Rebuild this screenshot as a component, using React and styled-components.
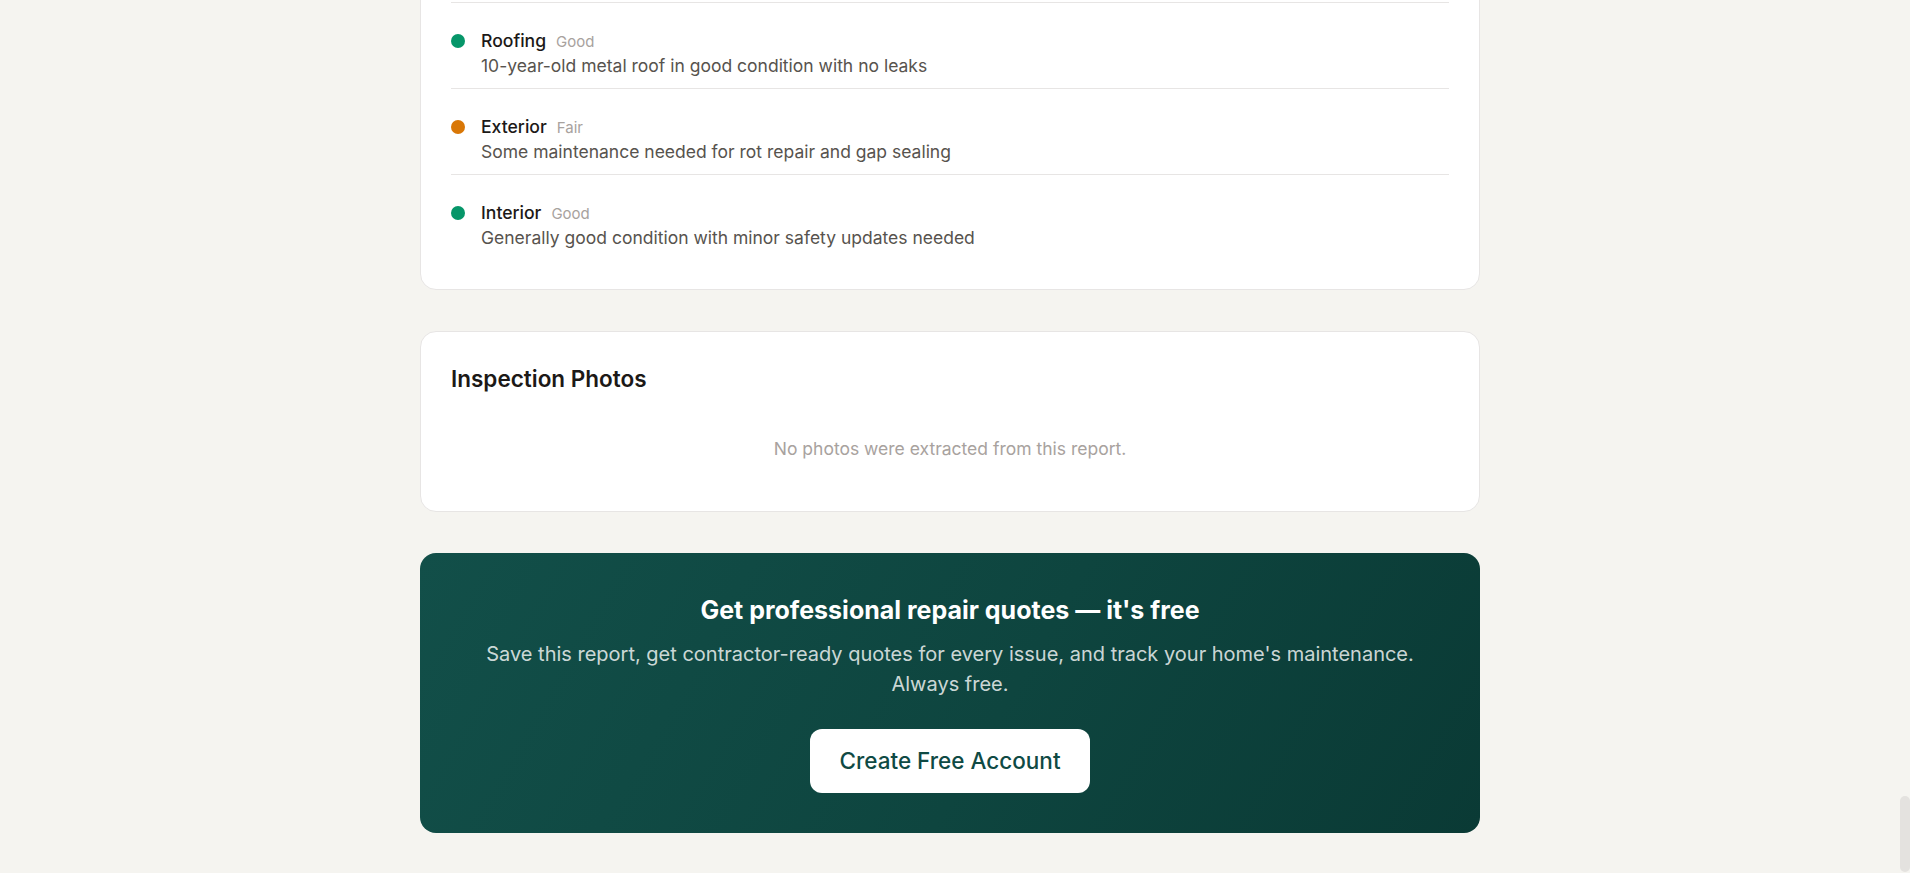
import React from "react";
import styled, { createGlobalStyle } from "styled-components";

const GlobalStyle = createGlobalStyle`
  html, body {
    margin: 0;
    padding: 0;
    background: #f5f4f0;
    font-family: Inter, "Noto Sans", sans-serif;
    overflow: hidden;
  }

  * {
    box-sizing: border-box;
  }
`;

const systems = [
  {
    name: "Roofing",
    status: "Good",
    tone: "good",
    note: "10-year-old metal roof in good condition with no leaks",
  },
  {
    name: "Exterior",
    status: "Fair",
    tone: "fair",
    note: "Some maintenance needed for rot repair and gap sealing",
  },
  {
    name: "Interior",
    status: "Good",
    tone: "good",
    note: "Generally good condition with minor safety updates needed",
  },
];

const toneColors = {
  good: "#069669",
  fair: "#d97706",
};

export default function App() {
  return (
    <>
      <GlobalStyle />
      <Page>
        <Column>
          <SystemsCard>
            <SystemList>
              {systems.map((item) => (
                <SystemRow key={item.name}>
                  <StatusDot $tone={item.tone} />
                  <SystemBody>
                    <SystemHead>
                      <SystemName>{item.name}</SystemName>
                      <SystemStatus>{item.status}</SystemStatus>
                    </SystemHead>
                    <SystemNote>{item.note}</SystemNote>
                  </SystemBody>
                </SystemRow>
              ))}
            </SystemList>
          </SystemsCard>

          <PhotosCard>
            <CardTitle>Inspection Photos</CardTitle>
            <EmptyText>No photos were extracted from this report.</EmptyText>
          </PhotosCard>

          <Banner>
            <BannerTitle>Get professional repair quotes — it's free</BannerTitle>
            <BannerText>
              Save this report, get contractor-ready quotes for every issue, and
              track your home's maintenance. Always free.
            </BannerText>
            <BannerButton type="button">Create Free Account</BannerButton>
          </Banner>
        </Column>
      </Page>
      <ScrollThumb />
    </>
  );
}

// 페이지를 아래쪽에 붙여서 스크롤 끝 상태처럼 보이게
const Page = styled.main`
  height: 100vh;
  display: flex;
  flex-direction: column;
  justify-content: flex-end;
  align-items: center;
  padding: 0 10px 40px 0;
  overflow: hidden;
`;

const Column = styled.div`
  width: 1060px;
  display: flex;
  flex-direction: column;
  gap: 41px;
  flex-shrink: 0;
`;

const Card = styled.section`
  background: #ffffff;
  border: 1px solid #e7e5e4;
  border-radius: 16px;
`;

const SystemsCard = styled(Card)`
  padding: 32px 30px 29px;
`;

const PhotosCard = styled(Card)`
  padding: 32px 30px;
`;

const CardTitle = styled.h2`
  margin: 0 0 12px;
  font-size: 22.5px;
  line-height: 30px;
  font-weight: 600;
  color: #1c1917;
`;

const SystemList = styled.ul`
  list-style: none;
  margin: 0;
  padding: 0;
`;

const SystemRow = styled.li`
  display: flex;
  align-items: flex-start;
  gap: 16px;
  padding: 25px 0 9px;
  border-top: 1px solid #e7e5e4;
`;

const StatusDot = styled.span`
  width: 14px;
  height: 14px;
  margin-top: 6px;
  border-radius: 50%;
  flex-shrink: 0;
  background: ${({ $tone }) => toneColors[$tone]};
`;

const SystemBody = styled.div`
  display: flex;
  flex-direction: column;
`;

const SystemHead = styled.div`
  display: flex;
  align-items: baseline;
  gap: 10px;
`;

const SystemName = styled.span`
  font-size: 17.6px;
  line-height: 25px;
  font-weight: 500;
  color: #1c1917;
`;

const SystemStatus = styled.span`
  font-size: 15px;
  line-height: 20px;
  color: #a8a29e;
`;

const SystemNote = styled.p`
  margin: 0;
  font-size: 17.5px;
  line-height: 26px;
  color: #57534e;
`;

const EmptyText = styled.p`
  margin: 0;
  padding: 30px 0 17px;
  text-align: center;
  font-size: 17.5px;
  line-height: 26px;
  color: #a8a29e;
`;

const Banner = styled.section`
  display: flex;
  flex-direction: column;
  align-items: center;
  padding: 40px 48px;
  border-radius: 16px;
  background: linear-gradient(120deg, #124f49 0%, #0e453f 55%, #0a3a35 100%);
  text-align: center;
`;

const BannerTitle = styled.h2`
  margin: 0 0 12px;
  font-size: 25px;
  line-height: 34px;
  font-weight: 700;
  color: #ffffff;
`;

const BannerText = styled.p`
  margin: 0 0 30px;
  font-size: 20px;
  line-height: 30px;
  color: rgba(255, 255, 255, 0.8);
`;

const BannerButton = styled.button`
  padding: 17px 29px;
  border: none;
  border-radius: 12px;
  background: #ffffff;
  color: #0f4a44;
  font-family: inherit;
  font-size: 22.5px;
  line-height: 30px;
  font-weight: 500;
  cursor: pointer;
`;

const ScrollThumb = styled.div`
  position: fixed;
  right: 0;
  bottom: 1px;
  width: 10px;
  height: 76px;
  border-radius: 5px;
  background: #e4e2df;
`;
